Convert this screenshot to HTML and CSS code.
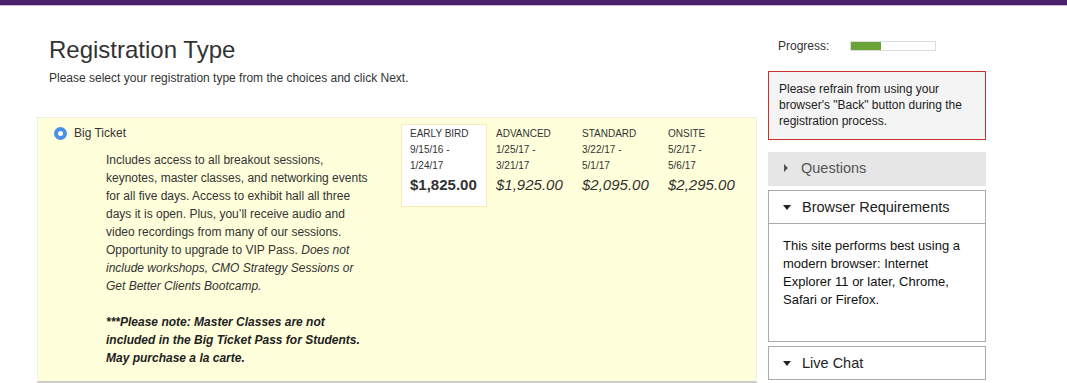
FILE: index.html
```html
<!DOCTYPE html>
<html lang="en">

<head>
    <meta charset="UTF-8">
    <meta name="viewport" content="width=device-width, initial-scale=1.0">
    <title>Registration Type</title>
    <link rel="stylesheet" href="styles.css">
</head>

<body>
    <div class="topbar"></div>
    <div class="page">
        <div class="main">
            <div class="header">
                <h1>Registration Type</h1>
                <p class="intro">Please select your registration type from the choices and click Next.</p>
            </div>

            <div class="option">
                <div class="option-info">
                    <label class="option-label">
                        <span class="radio"></span>
                        Big Ticket
                    </label>
                    <div class="description">
                        <p>Includes access to all breakout sessions, keynotes, master classes, and networking events for all five days. Access to exhibit hall all three days it is open. Plus, you’ll receive audio and video recordings from many of our sessions. Opportunity to upgrade to VIP Pass. <em>Does not include workshops, CMO Strategy Sessions or Get Better Clients Bootcamp.</em></p>
                        <p class="note"><em><strong>***Please note: Master Classes are not included in the Big Ticket Pass for Students. May purchase a la carte.</strong></em></p>
                    </div>
                </div>
                <div class="prices">
                    <div class="price-col current">
                        <div class="period">EARLY BIRD</div>
                        <div class="dates">9/15/16 -<br>1/24/17</div>
                        <div class="amount">$1,825.00</div>
                    </div>
                    <div class="price-col">
                        <div class="period">ADVANCED</div>
                        <div class="dates">1/25/17 -<br>3/21/17</div>
                        <div class="amount">$1,925.00</div>
                    </div>
                    <div class="price-col">
                        <div class="period">STANDARD</div>
                        <div class="dates">3/22/17 -<br>5/1/17</div>
                        <div class="amount">$2,095.00</div>
                    </div>
                    <div class="price-col">
                        <div class="period">ONSITE</div>
                        <div class="dates">5/2/17 -<br>5/6/17</div>
                        <div class="amount">$2,295.00</div>
                    </div>
                </div>
            </div>
        </div>

        <div class="sidebar">
            <div class="progress">
                <span>Progress:</span>
                <div class="progress-bar">
                    <div class="progress-fill" style="width: 35%"></div>
                </div>
            </div>

            <div class="alert">
                Please refrain from using your browser's "Back" button during the registration process.
            </div>

            <div class="panel collapsed">
                <div class="panel-head"><span class="caret right"></span>Questions</div>
            </div>

            <div class="panel">
                <div class="panel-head"><span class="caret down"></span>Browser Requirements</div>
                <div class="panel-body">
                    This site performs best using a modern browser: Internet Explorer 11 or later, Chrome, Safari or Firefox.
                </div>
            </div>

            <div class="panel">
                <div class="panel-head"><span class="caret down"></span>Live Chat</div>
            </div>
        </div>
    </div>
</body>

</html>
```

FILE: styles.css
```css
body {
    margin: 0;
    font-family: "Liberation Sans", Arial, sans-serif;
    color: #333;
    background: #fff;
}

.topbar {
    height: 5px;
    background-color: #4a1f6b;
    border-bottom: 1px solid #c9b6da;
}

.page {
    display: flex;
    align-items: flex-start;
    padding-left: 37px;
}

.main {
    width: 720px;
}

.header {
    padding: 30px 12px 0;
}

h1 {
    margin: 0;
    font-size: 24px;
    line-height: 28px;
    font-weight: normal;
    color: #333;
}

.intro {
    margin: 6px 0 31px;
    font-size: 12px;
    line-height: 16px;
}

.option {
    display: flex;
    align-items: flex-start;
    background-color: #ffffdc;
    border: 1px solid #eeeee2;
    border-bottom: 2px solid #ccc;
    padding: 6px 0 14px;
}

.option-info {
    width: 347px;
    padding-left: 16px;
}

.option-label {
    display: flex;
    align-items: center;
    gap: 7px;
    font-size: 12px;
    line-height: 16px;
    padding-top: 1px;
}

.radio {
    width: 13px;
    height: 13px;
    border-radius: 50%;
    background-color: #4a8fe8;
    display: flex;
    align-items: center;
    justify-content: center;
}

.radio::after {
    content: "";
    width: 5px;
    height: 5px;
    border-radius: 50%;
    background: #fff;
}

.description {
    width: 266px;
    margin: 10px 0 0 52px;
    font-size: 12px;
    line-height: 18px;
}

.description p {
    margin: 0;
}

.description .note {
    margin-top: 18px;
    color: #222;
}

.prices {
    display: flex;
}

.price-col {
    width: 69px;
    padding: 1px 7px 10px 8px;
    border: 1px solid transparent;
    font-size: 10px;
    line-height: 16px;
}

.price-col.current {
    background: #fff;
    border-color: #fbe8b4;
}

.amount {
    font-size: 15px;
    line-height: 22px;
    font-style: italic;
    white-space: nowrap;
}

.current .amount {
    font-style: normal;
    font-weight: bold;
}

.sidebar {
    width: 218px;
    margin-left: 11px;
    padding-top: 32px;
}

.progress {
    display: flex;
    align-items: center;
    gap: 21px;
    padding-left: 10px;
    font-size: 12px;
    line-height: 16px;
}

.progress-bar {
    width: 84px;
    height: 8px;
    border: 1px solid #ddd;
    background: #fff;
}

.progress-fill {
    height: 100%;
    background-color: #6aa336;
}

.alert {
    margin-top: 17px;
    border: 1px solid #c9302c;
    background-color: #f4f4f4;
    padding: 9px 10px 10px;
    font-size: 12px;
    line-height: 16px;
    color: #222;
}

.panel {
    border: 1px solid #aaa;
    margin-top: 4px;
    background: #fff;
}

.panel.collapsed {
    margin-top: 12px;
    border-color: #e6e6e6;
    background-color: #e6e6e6;
}

.panel-head {
    display: flex;
    align-items: center;
    height: 32px;
    padding-left: 14px;
    font-size: 14.5px;
    color: #222;
}

.collapsed .panel-head {
    color: #555;
    padding-bottom: 2px;
    height: 30px;
}

.panel-body {
    border-top: 1px solid #aaa;
    height: 92px;
    padding: 13px 14px 12px;
    font-size: 13px;
    line-height: 18px;
    color: #111;
}

.caret {
    width: 0;
    height: 0;
    margin-right: 11px;
}

.caret.right {
    margin-left: 1px;
    margin-right: 13px;
    border-top: 4px solid transparent;
    border-bottom: 4px solid transparent;
    border-left: 4px solid #555;
}

.caret.down {
    border-left: 4px solid transparent;
    border-right: 4px solid transparent;
    border-top: 5px solid #222;
}
```
